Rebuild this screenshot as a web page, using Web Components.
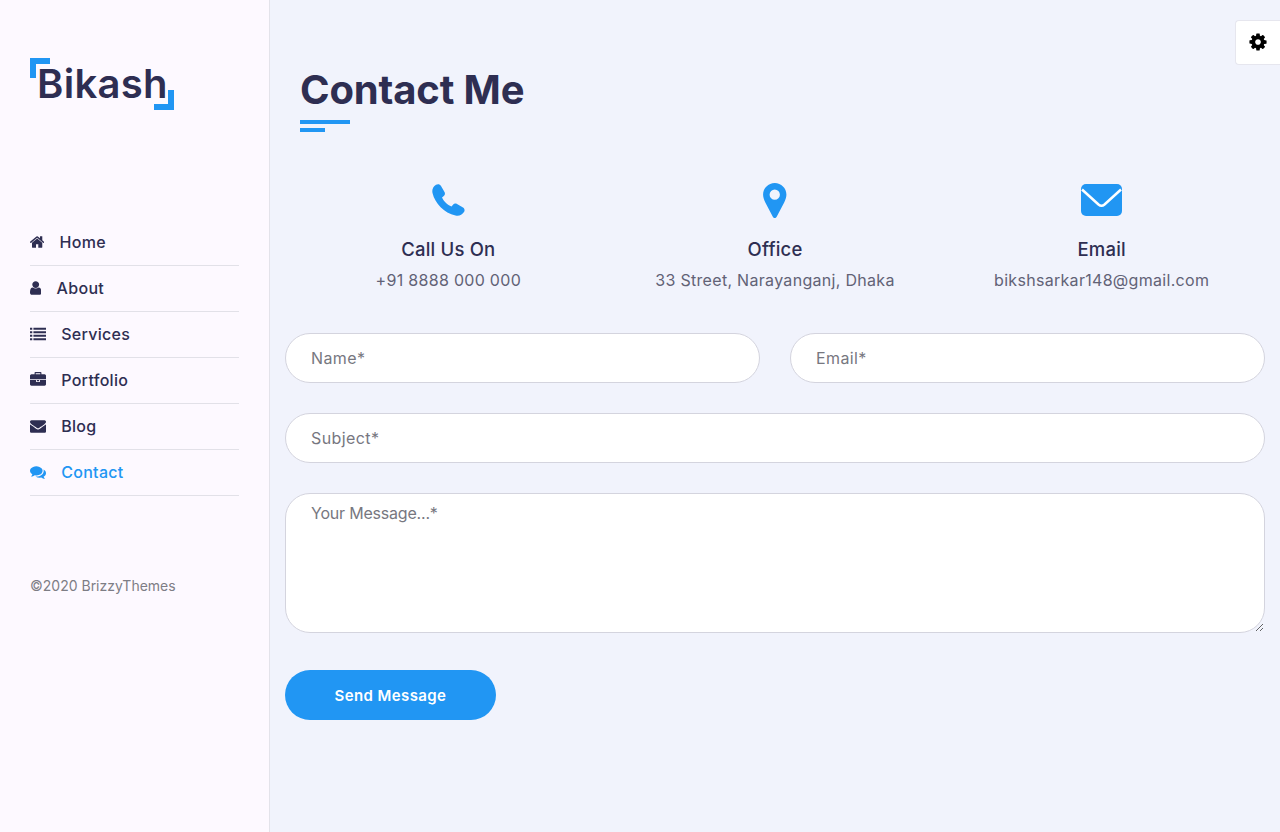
<!DOCTYPE html>
<html lang="en"><head><meta charset="utf-8"><title>Contact Me</title>
<style>
html,body{margin:0;height:100%}
body{font-family:Inter,"Liberation Sans",sans-serif;background:#f1f3fc;color:#2e2e52}
</style></head>
<body>
<x-app>
  <x-sidebar slot="side">
    <x-brand>Bikash</x-brand>
    <x-nav-item icon="home">Home</x-nav-item>
    <x-nav-item icon="user">About</x-nav-item>
    <x-nav-item icon="list">Services</x-nav-item>
    <x-nav-item icon="briefcase">Portfolio</x-nav-item>
    <x-nav-item icon="envelope">Blog</x-nav-item>
    <x-nav-item icon="comments" active>Contact</x-nav-item>
    <x-copy>©2020 BrizzyThemes</x-copy>
  </x-sidebar>
  <x-title>Contact Me</x-title>
  <x-info-row>
    <x-info-card icon="phone" heading="Call Us On">+91 8888 000 000</x-info-card>
    <x-info-card icon="pin" heading="Office">33 Street, Narayanganj, Dhaka</x-info-card>
    <x-info-card icon="mail" heading="Email">bikshsarkar148@gmail.com</x-info-card>
  </x-info-row>
  <x-contact-form></x-contact-form>
  <x-settings></x-settings>
</x-app>
<script>
const FA={
home:['97 0 1598 1792','M1472 992v480q0 26-19 45t-45 19h-384v-384h-256v384h-384q-26 0-45-19t-19-45v-480q0-1 .5-3t.5-3l575-474 575 474q1 2 1 6zm223-69l-62 74q-8 9-21 11h-3q-13 0-21-7l-692-577-692 577q-12 8-24 7-13-2-21-11l-62-74q-8-10-7-23.500t11-21.500l719-599q32-26 76-26t76 26l244 204v-195q0-14 9-23t23-9h192q14 0 23 9t9 23v408l219 182q10 8 11 21.500t-7 23.500z',14.3],
user:['256 0 1280 1792','M1536 1399q0 109-62.500 187t-150.500 78h-854q-88 0-150.500-78t-62.500-187q0-85 8.500-160.500t31.500-152 58.500-131 94-89 134.500-34.500q131 128 313 128t313-128q76 0 134.500 34.500t94 89 58.500 131 31.500 152 8.500 160.500zm-256-887q0 159-112.500 271.500t-271.500 112.500-271.500-112.500-112.500-271.500 112.500-271.500 271.500-112.500 271.500 112.500 112.500 271.500z',11.4],
list:['0 0 1792 1792','M0 208h256v224H0zM384 208h1408v224H384zM0 592h256v224H0zM384 592h1408v224H384zM0 976h256v224H0zM384 976h1408v224H384zM0 1360h256v224H0zM384 1360h1408v224H384z',16],
briefcase:['0 0 1792 1792','M640 256h512v-128h-512v128zm1152 640v480q0 66-47 113t-113 47h-1472q-66 0-113-47t-47-113v-480h672v160q0 26 19 45t45 19h320q26 0 45-19t19-45v-160h672zm-768 0v128h-256v-128h256zm768-480v384h-1792v-384q0-66 47-113t113-47h352v-160q0-40 28-68t68-28h576q40 0 68 28t28 68v160h352q66 0 113 47t47 113z',16],
envelope:['0 0 1792 1792','M1792 710v794q0 66-47 113t-113 47h-1472q-66 0-113-47t-47-113v-794q44 49 101 87 362 246 497 345 57 42 92.500 65.500t94.500 48 110 24.500h2q51 0 110-24.500t94.500-48 92.500-65.500q170-123 498-345 57-39 100-87zm0-294q0 79-49 151t-122 123q-376 261-468 325-10 7-42.500 30.500t-54 38-52 32.500-57.500 27-50 9h-2q-23 0-50-9t-57.500-27-52-32.500-54-38-42.500-30.500q-91-64-262-182.500t-205-142.500q-62-42-117-115.500t-55-136.500q0-78 41.500-130t118.500-52h1472q65 0 112.500 47t47.500 113z',16],
comments:['0 0 1792 1792','M1408 768q0 139-94 257t-256.500 186.500-353.500 68.500q-86 0-176-16-124 88-278 128-36 9-86 16h-3q-11 0-20.500-8t-11.500-21q-1-3-1-6.500t.5-6.500 2-6l2.500-5 3.500-5.500 4-5 4.500-5 4-4.500q5-6 23-25t26-29.500 22.500-29 25-38.500 20.500-44q-124-72-195-177t-71-224q0-139 94-257t256.500-186.500 353.500-68.500 353.500 68.500 256.500 186.500 94 257zm384 256q0 120-71 224.500t-195 176.500q10 24 20.500 44t25 38.500 22.500 29 26 29.500 23 25q1 1 4 4.500t4.500 5 4 5 3.500 5.500l2.500 5 2 6 .5 6.500-1 6.500q-3 14-13 22t-22 7q-50-7-86-16-154-40-278-128-90 16-176 16-271 0-472-132 58 4 88 4 161 0 309-45t264-129q125-92 192-212t67-254q0-77-23-152 129 71 204 178t75 230z',16],
cog:['0 0 1792 1792','M1152 896q0-106-75-181t-181-75-181 75-75 181 75 181 181 75 181-75 75-181zm512-109v222q0 12-8 23t-20 13l-185 28q-19 54-39 91 35 50 107 138 10 12 10 25t-9 23q-27 37-99 108t-94 71q-12 0-26-9l-138-108q-44 23-91 38-16 136-29 186-7 28-36 28h-222q-14 0-24.500-8.500t-11.500-21.500l-28-184q-49-16-90-37l-141 107q-10 9-25 9-14 0-25-11-126-114-165-168-7-10-7-23 0-12 8-23 15-21 51-66.500t54-70.500q-27-50-41-99l-183-27q-13-2-21-12.500t-8-23.500v-222q0-12 8-23t19-13l186-28q14-46 39-92-40-57-107-138-10-12-10-24 0-10 9-23 26-36 98.500-107.500t94.500-71.500q13 0 26 10l138 107q44-23 91-38 16-136 29-186 7-28 36-28h222q14 0 24.500 8.500t11.500 21.500l28 184q49 16 90 37l142-107q9-9 24-9 13 0 25 10 129 119 165 170 7 8 7 22 0 12-8 23-15 21-51 66.500t-54 70.500q26 50 41 98l183 28q13 2 21 12.500t8 23.500z',20]
};
const faSvg=(n)=>`<svg width="${FA[n][2]}" height="16" viewBox="${FA[n][0]}" fill="currentColor" aria-hidden="true"><path d="${FA[n][1]}"/></svg>`;
const BIG={
phone:`<svg width="33" height="32" viewBox="0 0 33 32" fill="#2196f3"><path d="M4 .8C6-.2 8 .3 9 2L12.500 8C13.300 9.500 13 11 11.800 12L10 13.500C11.500 17 15.500 21 19.500 22.500L21 20.700C22 19.500 23.500 19.200 25 20L31 23.500C32.700 24.500 33 26.500 32 28C30 31 27 32.300 23.500 31.500C12 29 3 19.500 .5 9C-.2 5.500 1 2.500 4 .8Z"/></svg>`,
pin:`<svg width="23.500" height="35" viewBox="0 0 24 36" fill="#2196f3"><path fill-rule="evenodd" d="M12 0C5.400 0 0 5.300 0 11.900c0 3 1 5.400 2.300 8.100L10 34.600c.9 1.800 3.100 1.800 4 0L21.700 20c1.300-2.700 2.300-5.100 2.300-8.100C24 5.300 18.600 0 12 0zm0 6.700a5.300 5.300 0 1 1 0 10.600 5.300 5.300 0 0 1 0-10.600z"/></svg>`,
mail:`<svg width="41" height="32" viewBox="0 0 41 32"><rect width="41" height="32" rx="5" fill="#2196f3"/><path d="M1 5.500 17.500 20.500Q20.500 23 23.500 20.500L40 5.500" fill="none" stroke="#fff" stroke-width="2.500"/></svg>`
};
function def(name,css,html,init){
  const t=document.createElement('template');
  t.innerHTML=`<style>${css}</style>${html}`;
  customElements.define(name,class extends HTMLElement{
    constructor(){super();this.attachShadow({mode:'open'}).appendChild(t.content.cloneNode(true));}
    connectedCallback(){init&&init.call(this,this.shadowRoot);}
  });
}
def('x-app',`:host{display:flex;min-height:832px;position:relative}
main{flex:1;min-width:0;padding:0 15px;box-sizing:border-box}`,
`<slot name="side"></slot><main><slot></slot></main>`);
def('x-sidebar',`:host{display:block;width:270px;flex:none;box-sizing:border-box;background:#fdf9ff;border-right:1px solid #e3e3ea;padding:58px 30px 0}`,`<slot></slot>`);
def('x-brand',`:host{display:block;width:144px;height:52px;box-sizing:border-box;position:relative;margin-bottom:110px}
span{display:block;font:580 40px/52px Inter,sans-serif;color:#2e2e52;padding-left:7px;letter-spacing:.3px}
:host::before,:host::after{content:"";position:absolute;width:14px;height:14px;border:6px solid #2196f3}
:host::before{left:0;top:0;border-right:0;border-bottom:0}
:host::after{right:0;bottom:0;border-left:0;border-top:0}`,`<span><slot></slot></span>`);
def('x-nav-item',`:host{display:flex;align-items:center;height:46px;width:209px;box-sizing:border-box;padding-bottom:2px;border-bottom:1px solid #e2e1e8;color:#2e2e52;font:500 16px Inter,sans-serif;letter-spacing:.3px}
:host([active]){color:#2196f3}
i{display:flex;margin-right:15.200px}
svg{display:block}`,`<i></i><slot></slot>`,function(r){
  r.querySelector('i').innerHTML=faSvg(this.getAttribute('icon'));
});
def('x-copy',`:host{display:block;margin-top:81px;font:400 14px/18px Inter,sans-serif;color:#7d7d85}`,`<slot></slot>`);
def('x-title',`:host{display:block;padding:69px 0 0 15px;height:63px}
h1{margin:0;font:700 40px/42px Inter,sans-serif;color:#2e2e52;letter-spacing:-.15px}
b{display:block;background:#2196f3;height:4px}
.a{width:50px;margin-top:9px}.b{width:25px;margin-top:4px}`,`<h1><slot></slot></h1><b class="a"></b><b class="b"></b>`);
def('x-info-row',`:host{display:grid;grid-template-columns:repeat(3,1fr);margin-top:50px}`,`<slot></slot>`);
def('x-info-card',`:host{display:flex;flex-direction:column;align-items:center;text-align:center}
.i{height:36px;display:flex;align-items:center;justify-content:center}
h3{margin:19px 0 0;font:500 18.500px/24px Inter,sans-serif;color:#2e2e52;letter-spacing:.2px}
p{margin:7px 0 0;font:400 16px/24px Inter,sans-serif;color:#626276;letter-spacing:.3px}`,
`<div class="i"></div><h3></h3><p><slot></slot></p>`,function(r){
  r.querySelector('.i').innerHTML=BIG[this.getAttribute('icon')];
  r.querySelector('h3').textContent=this.getAttribute('heading');
});
def('x-contact-form',`:host{display:block;margin-top:41px}
form{display:flex;flex-direction:column;gap:30px;margin:0}
.row{display:flex;gap:30px}
input,textarea{flex:1;min-width:0;display:block;box-sizing:border-box;width:100%;background:#fff;border:1px solid #d4d4de;outline:0;border-radius:25px;padding:0 25px;height:50px;font:400 16px Inter,sans-serif;color:#2e2e52;margin:0;letter-spacing:.4px}
textarea{height:140px;padding-top:8px;line-height:22px;letter-spacing:-.2px}
::placeholder{color:#77777f;opacity:1}
button{align-self:flex-start;width:211px;height:50px;border:0;border-radius:25px;background:#2196f3;color:#fff;font:600 15px Inter,sans-serif;margin-top:7px;padding:0;letter-spacing:.4px}`,
`<form><div class="row"><input placeholder="Name*" aria-label="Name"><input placeholder="Email*" aria-label="Email"></div>
<div class="row"><input placeholder="Subject*" aria-label="Subject"></div>
<div class="row"><textarea placeholder="Your Message...*" aria-label="Message"></textarea></div>
<button type="button">Send Message</button></form>`);
def('x-settings',`:host{position:absolute;right:0;top:20px;width:45px;height:45px;box-sizing:border-box;background:#fff;border:1px solid #e6e6ee;border-right:0;border-radius:4px 0 0 4px;display:flex;align-items:center;justify-content:center;color:#000}
svg{display:block;width:20px;height:20px}`,
`<span style="display:flex;margin-top:-2px">${faSvg('cog')}</span>`);
</script>
</body></html>
